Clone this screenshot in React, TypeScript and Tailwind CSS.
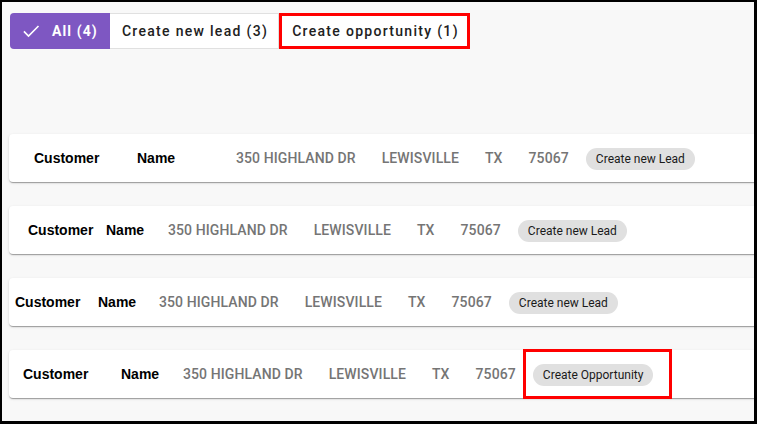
import React from 'react';

interface Row {
  id: number;
  pad: string;
  customerW: string;
  nameW: string;
  action: string;
  marked?: boolean;
}

const rows: Row[] = [
  { id: 1, pad: 'pl-[25px]', customerW: 'w-[103px]', nameW: 'w-[99px]', action: 'Create new Lead' },
  { id: 2, pad: 'pl-[19px]', customerW: 'w-[78px]', nameW: 'w-[62px]', action: 'Create new Lead' },
  { id: 3, pad: 'pl-[6px]', customerW: 'w-[83px]', nameW: 'w-[61px]', action: 'Create new Lead' },
  { id: 4, pad: 'pl-[14px]', customerW: 'w-[98px]', nameW: 'w-[62px]', action: 'Create Opportunity', marked: true },
];

const App: React.FC = () => {
  return (
    <div className="w-[757px] h-[424px] overflow-hidden bg-black">
      <div className="mt-[2px] ml-[2px] w-[752px] h-[419px] overflow-hidden bg-[#f8f8f8] font-['Roboto',sans-serif]">
        {/* Filter tabs */}
        <div className="flex mt-[11px] ml-[8px] h-[36px]">
          <button className="flex items-center w-[100px] h-full rounded-l-[4px] bg-[#7e57c2] text-white text-[14px] font-bold tracking-[1.1px] pl-[11px]">
            <svg width="20" height="20" viewBox="0 0 24 24" className="mr-[11px]">
              <path d="M3.5 12.5l5.5 5.5L21 6" fill="none" stroke="white" strokeWidth="2" />
            </svg>
            All (4)
          </button>
          <button className="w-[169px] h-full bg-white border-y border-r border-[#e0e0e0] text-[#212121] text-[14px] font-medium tracking-[1.3px] pl-[2px]">
            Create new lead (3)
          </button>
          <button className="w-[191px] h-full bg-white border-[3px] border-[#ff0000] text-[#212121] text-[14px] font-medium tracking-[1.3px] pl-[2px]">
            Create opportunity (1)
          </button>
        </div>

        {/* Result cards */}
        <div className="mt-[85px] ml-[7px] flex flex-col gap-[24px]">
          {rows.map((row) => (
            <div
              key={row.id}
              className={`relative flex items-center w-[780px] h-[48px] bg-white rounded-[4px] shadow-[0_2px_1px_-1px_rgba(0,0,0,0.2),0_1px_1px_0_rgba(0,0,0,0.14),0_1px_3px_0_rgba(0,0,0,0.12)] ${row.pad}`}
            >
              <span className={`${row.customerW} shrink-0 font-['Liberation_Sans',Arial,sans-serif] font-bold text-[14px] text-black`}>
                Customer
              </span>
              <span className={`${row.nameW} shrink-0 font-['Liberation_Sans',Arial,sans-serif] font-bold text-[14px] text-black`}>
                Name
              </span>
              <div className="flex items-center gap-[26px] text-[14px] font-medium tracking-[0.1px] text-[#757575]">
                <span>350 HIGHLAND DR</span>
                <span>LEWISVILLE</span>
                <span>TX</span>
                <span>75067</span>
              </div>
              <span className="relative ml-[17px]">
                <span className="inline-flex items-center h-[22px] px-[10px] rounded-full bg-[#e0e0e0] text-[12px] text-[#1a1a1a]">
                  {row.action}
                </span>
                {row.marked && (
                  <span className="absolute -left-[10px] -right-[19px] -top-[13px] -bottom-[13px] border-[3px] border-[#ff0000]" />
                )}
              </span>
            </div>
          ))}
        </div>
      </div>
    </div>
  );
};

export default App;
